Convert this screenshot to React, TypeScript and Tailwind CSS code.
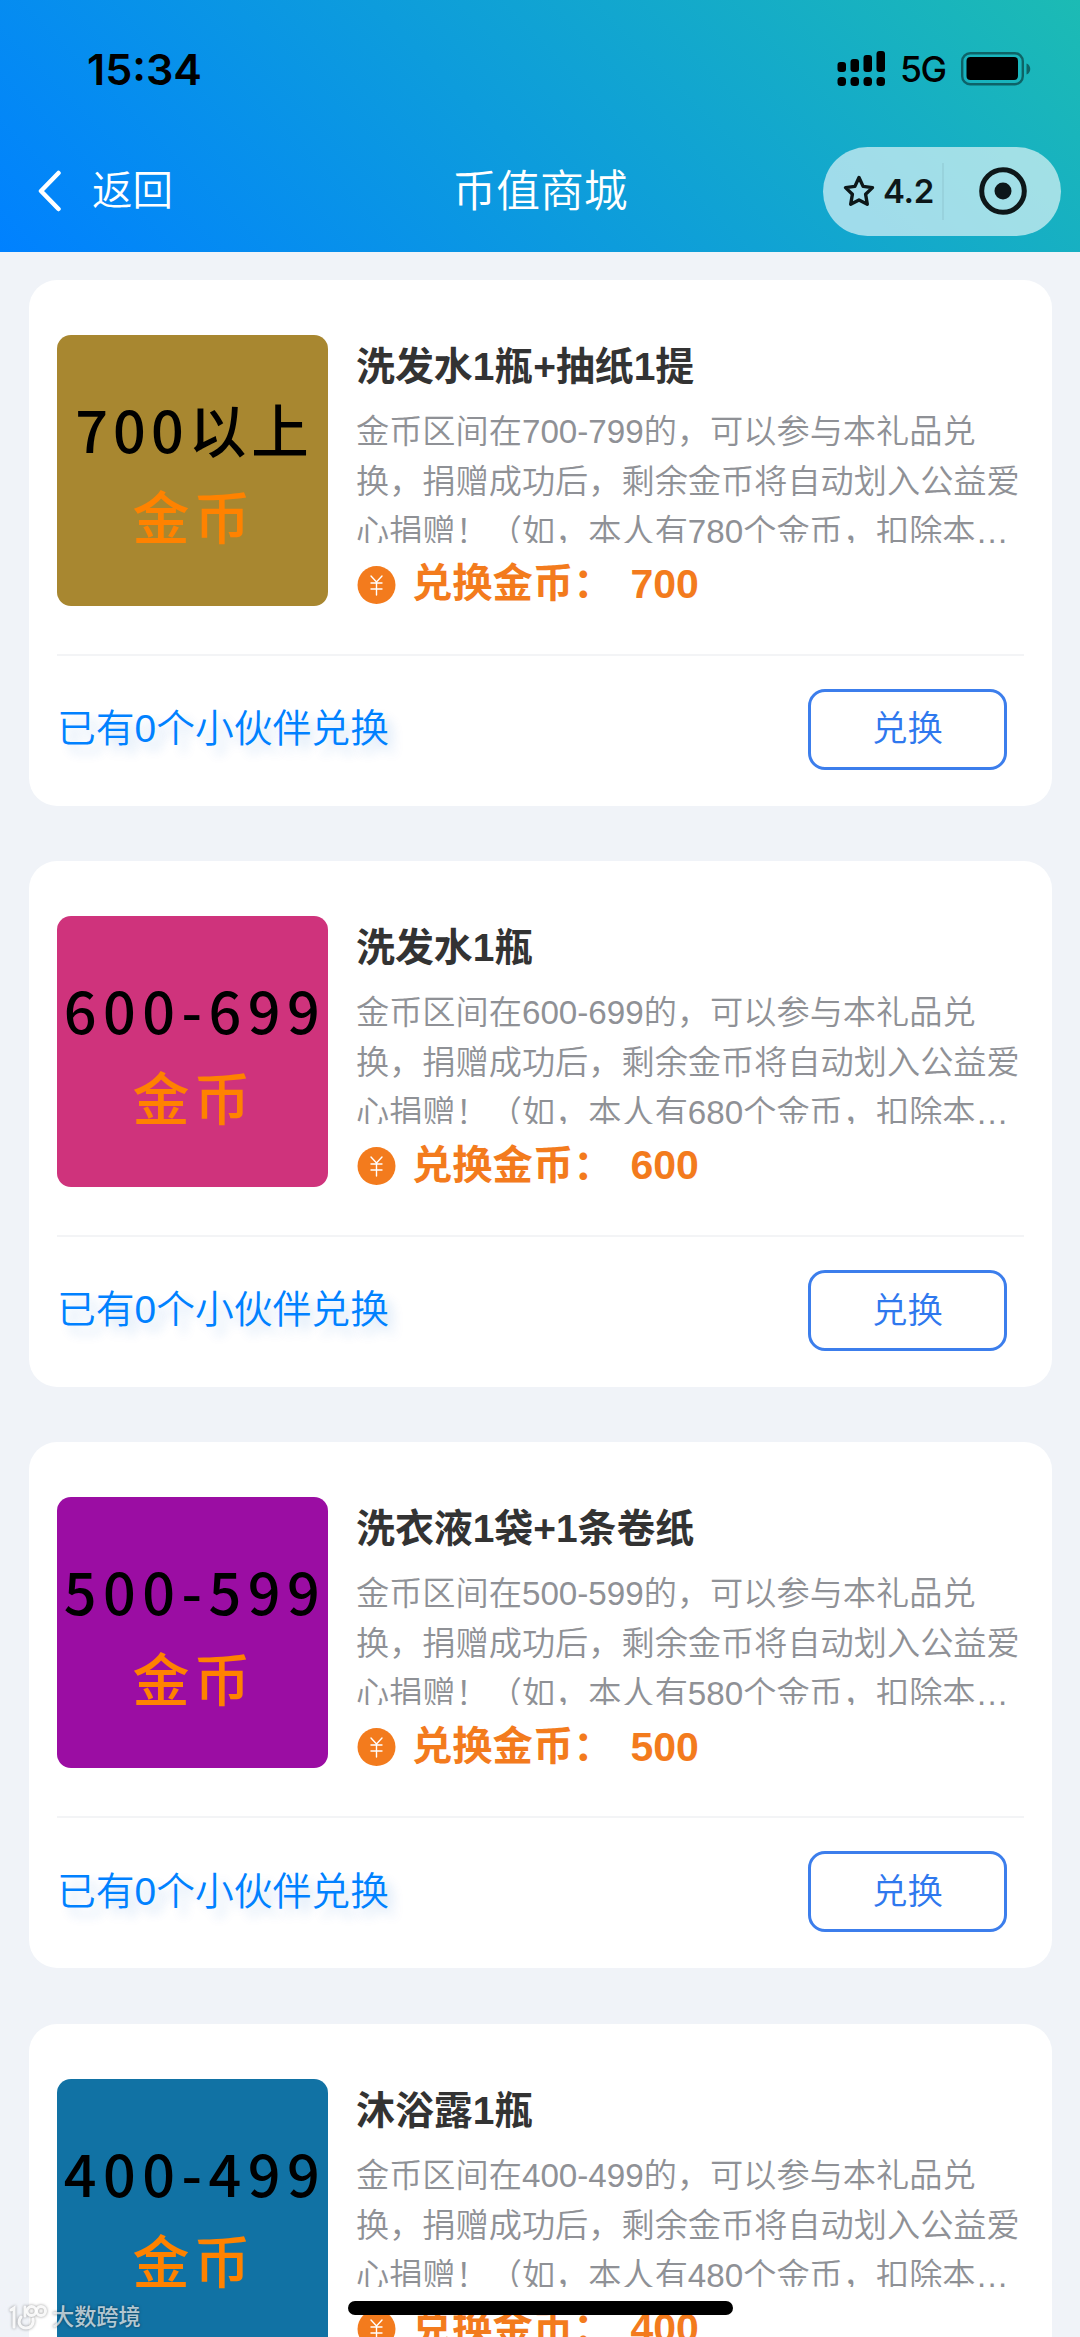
type Prize = {
  title: string;
  min: number;
  range: string;
  label: string;
  example: number;
  cover: string;
  labelStyle: string;
};

const prizes: Prize[] = [
  { title: '洗发水1瓶+抽纸1提', min: 700, range: '700-799', label: '700以上', example: 780, cover: 'bg-[#a88730]', labelStyle: 'pl-[4px] tracking-[5px]' },
  { title: '洗发水1瓶', min: 600, range: '600-699', label: '600-699', example: 680, cover: 'bg-[#cf337c]', labelStyle: 'pl-[5px] tracking-[6.5px]' },
  { title: '洗衣液1袋+1条卷纸', min: 500, range: '500-599', label: '500-599', example: 580, cover: 'bg-[#9b0da3]', labelStyle: 'pl-[5px] tracking-[6.5px]' },
  { title: '沐浴露1瓶', min: 400, range: '400-499', label: '400-499', example: 480, cover: 'bg-[#1172a4]', labelStyle: 'pl-[5px] tracking-[6.5px]' },
];

function SignalIcon() {
  return (
    <svg width="49" height="36" viewBox="0 0 49 36">
      <rect x="0.5" y="11" width="8.5" height="10" rx="3" />
      <rect x="13.5" y="8" width="8.5" height="13" rx="3" />
      <rect x="26.5" y="4" width="8.5" height="17" rx="3" />
      <rect x="39.5" y="0" width="8.5" height="21" rx="3" />
      {[0.5, 13.5, 26.5, 39.5].map(x => (
        <rect key={x} x={x} y="26" width="8.5" height="9" rx="3.5" />
      ))}
    </svg>
  );
}

function BatteryIcon() {
  return (
    <svg width="70" height="34" viewBox="0 0 70 34">
      <rect x="1.2" y="1.2" width="60.6" height="31" rx="8" fill="none" stroke="#000" strokeOpacity="0.45" strokeWidth="2.4" />
      <rect x="5.5" y="5" width="51.5" height="23" rx="4" />
      <path d="M65.5 11.5c5 1.5 5 9.500 0 11z" fillOpacity="0.45" />
    </svg>
  );
}

function Header() {
  return (
    <header className="h-[252px] bg-[linear-gradient(45deg,#0081ff,#1cbbb4)]">
      <div className="flex h-[138px] items-center justify-between pr-[49px] pl-[87px]">
        <div className="font-[Inter] text-[43px] leading-none font-semibold text-black">15:34</div>
        <div className="flex items-center">
          <SignalIcon />
          <span className="ml-[14px] w-[48px] pt-[2px] font-[Inter] text-[35.5px] leading-none font-medium tracking-[-1.5px]">5G</span>
          <span className="ml-[13px]"><BatteryIcon /></span>
        </div>
      </div>
      <div className="grid h-[106px] grid-cols-3 items-center text-white">
        <div className="flex items-center pl-[37px]">
          <svg width="24" height="42" viewBox="0 0 24 42" fill="none" stroke="currentColor" strokeWidth="4.500" strokeLinecap="round" strokeLinejoin="round">
            <path d="M21.500 3 4 21l17.500 18" />
          </svg>
          <span className="ml-[31px] pt-[1px] text-[40.5px] leading-none font-[350]">返回</span>
        </div>
        <h1 className="pt-[1px] text-center text-[43.8px] leading-none font-[350]">币值商城</h1>
        <div className="mr-[19px] flex h-[89px] w-[238px] items-center justify-self-end rounded-full bg-white/60 text-[#0d1719]">
          <svg className="ml-[20px]" width="32" height="32" viewBox="0 0 32 32" fill="none" stroke="currentColor" strokeWidth="3.400" strokeLinejoin="round">
            <path d="M16 2.500l4.100 8.900 9.400 1.200-6.900 6.700 1.700 10L16 24.900l-8.300 4.400 1.700-10-6.900-6.700 9.400-1.200z" />
          </svg>
          <span className="ml-[8px] w-[51px] font-[Inter] text-[33px] leading-none font-semibold tracking-[-0.3px]">4.2</span>
          <div className="ml-[8px] h-[57px] w-[2px] bg-black/5" />
          <svg className="ml-[35px]" width="48" height="48" viewBox="0 0 48 48">
            <circle cx="24" cy="24" r="21.300" fill="none" stroke="currentColor" strokeWidth="5" />
            <circle cx="24" cy="24" r="8.500" fill="currentColor" />
          </svg>
        </div>
      </div>
    </header>
  );
}

function CoinIcon() {
  return (
    <svg width="40" height="38" viewBox="0 0 40 38" fill="none">
      <circle cx="20.500" cy="19" r="19" fill="#f37b1d" />
      <path d="M15 10l5.500 6 5.500-6M20.500 16v13M15 17h11M15 23h11" stroke="#fff" strokeWidth="1.400" strokeLinecap="round" />
    </svg>
  );
}

function PrizeCard({ prize }: { prize: Prize }) {
  const description = `金币区间在${prize.range}的，可以参与本礼品兑换，捐赠成功后，剩余金币将自动划入公益爱心捐赠！（如，本人有${prize.example}个金币，扣除本次兑换的金币后，其余全部捐赠）`;

  return (
    <article className="h-[526px] shrink-0 rounded-[28px] bg-white px-[28px] pt-[55px]">
      <div className="flex h-[319px]">
        <div className={`flex h-[271px] w-[271px] shrink-0 flex-col items-center overflow-hidden rounded-[14px] pt-[61px] font-['Noto_Sans_CJK_SC',sans-serif] text-[57px] font-medium whitespace-nowrap ${prize.cover}`}>
          <div className={`h-[86px] text-[57.5px] leading-[64px] text-black ${prize.labelStyle}`}>{prize.label}</div>
          <div className="pl-[2px] leading-[64px] tracking-[4px] text-[#ff8200]">金币</div>
        </div>
        <div className="ml-[28px] w-[668px]">
          <h2 className="mt-[3px] h-[69px] text-[38.9px] leading-[58px] font-bold text-[#333]">{prize.title}</h2>
          <div className="h-[136px] overflow-hidden">
            <p className="line-clamp-3 text-[33.2px] leading-[50px] font-[350] text-[#8f9196]">{description}</p>
          </div>
          <div className="mt-[13px] flex h-[58px] items-center text-[40.3px] font-bold text-[#f37b1d]">
            <CoinIcon />
            <span className="ml-[16px]">兑换金币：</span>
            <span className="ml-[17px] text-[41px]">{prize.min}</span>
          </div>
        </div>
      </div>
      <div className="flex h-[149px] items-center justify-between border-t-2 border-[#f3f4f6] pr-[17px]">
        <span className="text-[38.8px] font-[350] text-[#0081ff] [text-shadow:8px_8px_11px_rgba(0,102,204,0.2)]">已有0个小伙伴兑换</span>
        <button className="h-[81px] w-[199px] rounded-[17px] border-[3px] border-[#3c7eec] pt-[2px] text-[35.5px] font-[350] text-[#2f78ee]">兑换</button>
      </div>
    </article>
  );
}

function Watermark() {
  return (
    <div className="absolute bottom-[4px] left-[8px] flex items-center text-white/70 [text-shadow:0_0_3px_rgba(0,0,0,0.5)]">
      <svg className="overflow-visible drop-shadow-[0_0_1.5px_rgba(0,0,0,0.45)]" width="40" height="30" viewBox="0 0 40 30" fill="none" stroke="#fff" strokeOpacity="0.9" strokeWidth="3" strokeLinecap="round">
        <path d="M3 7l3-2v19M13 14c-4 5-1 11 5 11 5 0 8-4 7-9M17 4v9" />
        <circle cx="23.500" cy="8" r="4.500" />
        <circle cx="33" cy="8" r="4.500" />
      </svg>
      <span className="ml-[4px] text-[22.200px] leading-[30px] font-medium">大数跨境</span>
    </div>
  );
}

export default function App() {
  return (
    <main lang="zh-CN" className="relative h-[2337px] w-[1080px] overflow-hidden bg-[#f0f3f8] font-['Liberation_Sans','Noto_Sans_CJK_SC',sans-serif]">
      <Header />
      <div className="flex flex-col gap-[55.400px] pt-[27.600px] pr-[28px] pl-[29px]">
        {prizes.map(prize => (
          <PrizeCard key={prize.min} prize={prize} />
        ))}
      </div>
      <Watermark />
      {/* iOS home indicator */}
      <div className="absolute bottom-[22px] left-[348px] h-[14px] w-[385px] rounded-full bg-black" />
    </main>
  );
}
